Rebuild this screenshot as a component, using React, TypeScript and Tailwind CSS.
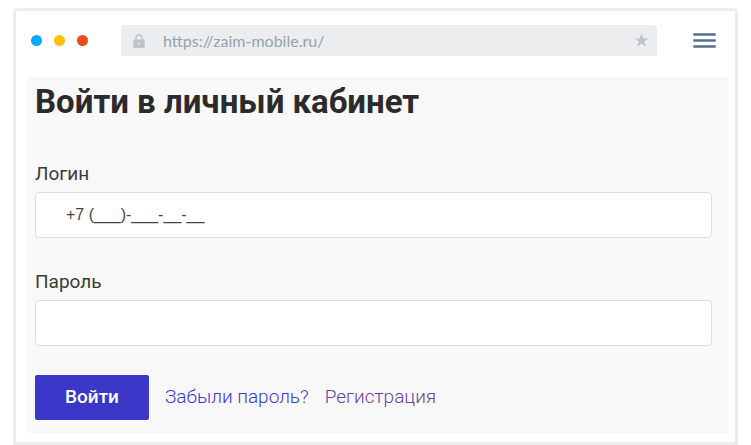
import React, { useState } from 'react';

export default function App() {
  return (
    <main className="bg-white pt-2 pr-[13px] pl-[13px] font-[Roboto,sans-serif]">
      <div className="rounded-t-[4px] border-[3px] border-[#ecedef] bg-white">
        <BrowserBar />
        <div className="mr-[7px] mb-[9px] ml-[11px] bg-[#f8f8f8] pt-[5px] pr-4 pb-[13px] pl-2">
          <LoginForm />
        </div>
      </div>
    </main>
  );
}

function BrowserBar() {
  return (
    <header className="flex items-center pt-[14px] pr-[19px] pb-[21px] pl-[15px]">
      <div className="flex gap-3">
        <span className="size-[11px] rounded-full bg-[#03a9fc]" />
        <span className="size-[11px] rounded-full bg-[#ffc107]" />
        <span className="size-[11px] rounded-full bg-[#e84c1b]" />
      </div>

      <div className="mr-9 ml-[33px] flex h-[31px] flex-1 items-center rounded-[3px] bg-[#ecedef] pr-2 pl-3">
        <LockIcon />
        <span className="ml-[18px] flex-1 font-[Lato,sans-serif] text-[16px] leading-5 text-[#90a4ae]">
          https://zaim-mobile.ru/
        </span>
        <StarIcon />
      </div>

      <button type="button" aria-label="Меню" className="w-[23px]">
        <MenuIcon />
      </button>
    </header>
  );
}

function LoginForm() {
  const [login, setLogin] = useState('+7 (___)-___-__-__');
  const [password, setPassword] = useState('');

  return (
    <form onSubmit={(e) => e.preventDefault()}>
      <h1 className="mb-10 text-[33px] leading-10 font-bold text-[#2b2b2b]">Войти в личный кабинет</h1>

      <div className="flex flex-col gap-8">
        <Field id="login" label="Логин" type="tel" value={login} onChange={setLogin} />
        <Field id="password" label="Пароль" type="password" value={password} onChange={setPassword} />
      </div>

      <div className="mt-[29px] flex items-center gap-4">
        <button type="submit" className="h-[45px] w-[114px] rounded-[2px] bg-[#3b37c9] text-[19px] font-medium text-white">
          Войти
        </button>
        <a href="#forgot" className="text-[19px] font-light text-[#3a35e0]">
          Забыли пароль?
        </a>
        <a href="#register" className="text-[19px] font-light text-[#6f3fa0]">
          Регистрация
        </a>
      </div>
    </form>
  );
}

type FieldProps = {
  id: string;
  label: string;
  type: string;
  value: string;
  onChange: (value: string) => void;
};

function Field({ id, label, type, value, onChange }: FieldProps) {
  return (
    <div>
      <label htmlFor={id} className="mb-[6px] block text-[19px] leading-6 text-[#3a3a3a]">
        {label}
      </label>
      <input
        id={id}
        type={type}
        value={value}
        onChange={(e) => onChange(e.target.value)}
        className="block h-[46px] w-full rounded-[4px] border border-[#dedede] bg-white px-[30px] font-['Liberation_Sans',sans-serif] text-[16px] text-[#444444] outline-none"
      />
    </div>
  );
}

function LockIcon() {
  return (
    <svg className="h-[14px] w-3" viewBox="0 0 12 14" fill="none">
      <path d="M3 6V4a3 3 0 0 1 6 0v2" stroke="#bcc5cb" strokeWidth="1.4" />
      <rect x="0.3" y="5.4" width="11.4" height="8.6" rx="1" fill="#bcc5cb" />
      <circle cx="6" cy="9.5" r="1.1" fill="#ecedef" />
    </svg>
  );
}

function StarIcon() {
  return (
    <svg className="size-[15px]" viewBox="0 0 15 15" fill="#bcc5cb">
      <path d="M7.5 0.3L9.2 5.4H14.5L10.2 8.6L11.9 13.8L7.5 10.6L3.1 13.8L4.8 8.6L0.5 5.4H5.8Z" />
    </svg>
  );
}

function MenuIcon() {
  return (
    <svg className="block h-[15px] w-[23px]" viewBox="0 0 23 15" stroke="#54718f" strokeWidth="2.4">
      <path d="M0.3 1.5H22.7M0.3 7.5H22.7M0.3 13.5H22.7" />
    </svg>
  );
}
